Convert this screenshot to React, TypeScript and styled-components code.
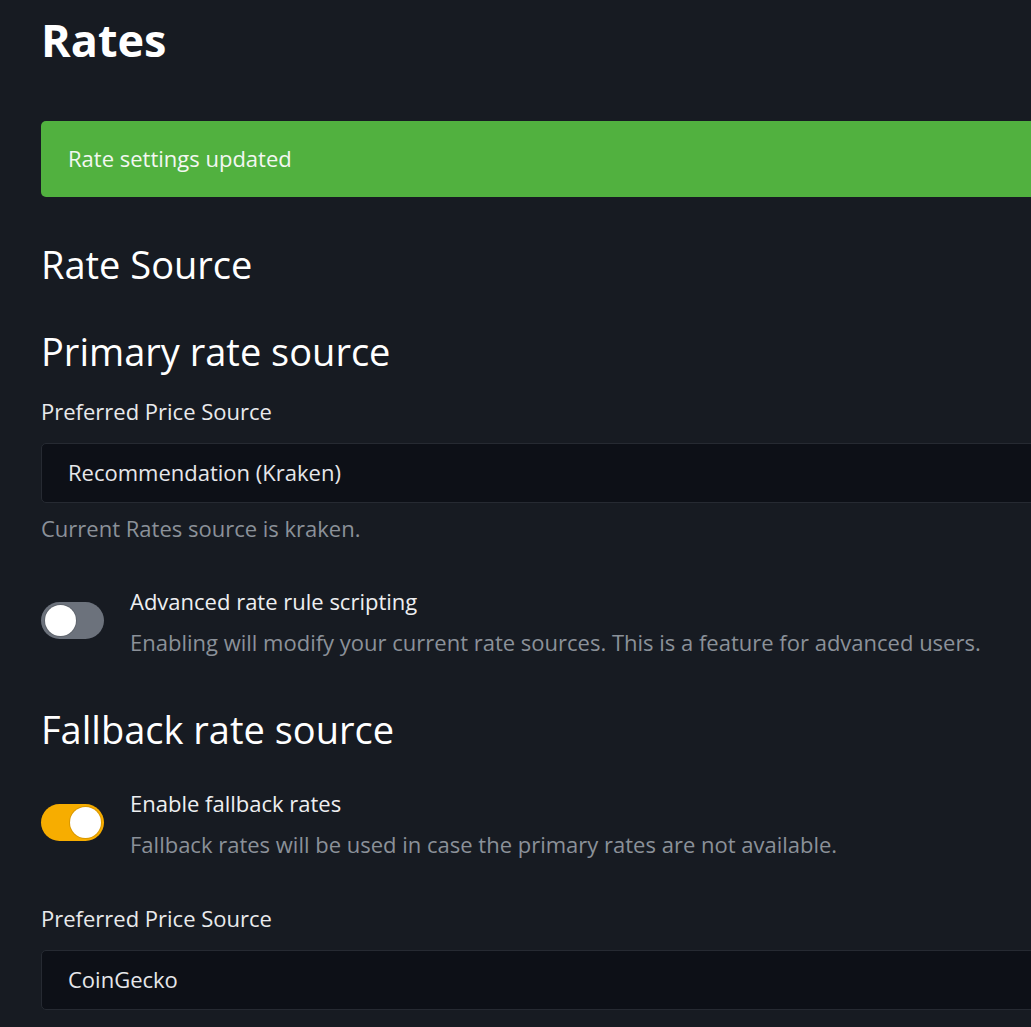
import React from "react";
import styled, { createGlobalStyle } from "styled-components";

const GlobalStyle = createGlobalStyle`
  html, body {
    margin: 0;
    padding: 0;
    background: #171b22;
    overflow: hidden;
  }
  body {
    font-family: "Open Sans", "DejaVu Sans", sans-serif;
    color: #e9eaec;
  }
  * { box-sizing: border-box; }
`;

const Page = styled.main`
  padding: 13px 0 0 41px;
  width: 1240px;
`;

const Title = styled.h2`
  margin: 0;
  font-size: 45px;
  line-height: 54px;
  font-weight: 700;
  color: #ffffff;
`;

const Alert = styled.div`
  margin-top: 54px;
  height: 76px;
  padding: 21px 27px;
  border-radius: 5px;
  background: #51b13f;
  color: #f3f7f2;
  font-size: 22px;
  line-height: 33px;
`;

const Heading = styled.h3<{ $gap: number }>`
  margin: ${(p) => p.$gap}px 0 0;
  font-size: 38px;
  line-height: 45px;
  font-weight: 400;
  color: #ffffff;
`;

const Label = styled.label<{ $gap: number }>`
  display: block;
  margin-top: ${(p) => p.$gap}px;
  font-size: 22px;
  line-height: 33px;
  color: #e9eaec;
`;

const Select = styled.div`
  margin-top: 15px;
  height: 60px;
  padding: 12px 26px 13px;
  border: 1px solid #262a32;
  border-radius: 5px;
  background: #0d1017;
  color: #e6e7ea;
  font-size: 22px;
  line-height: 33px;
`;

const Help = styled.div<{ $gap: number }>`
  margin-top: ${(p) => p.$gap}px;
  font-size: 22px;
  line-height: 33px;
  color: #8b9199;
`;

const SwitchRow = styled.div<{ $gap: number }>`
  margin-top: ${(p) => p.$gap}px;
  display: flex;
  align-items: flex-start;
  gap: 26px;
`;

const Track = styled.span<{ $on: boolean }>`
  position: relative;
  flex: none;
  margin-top: 17px;
  width: 63px;
  height: 37px;
  border-radius: 19px;
  background: ${(p) => (p.$on ? "#f7ad00" : "#6c727c")};
`;

const Knob = styled.span<{ $on: boolean }>`
  position: absolute;
  top: 3px;
  left: ${(p) => (p.$on ? "29px" : "4px")};
  width: 31px;
  height: 31px;
  border-radius: 50%;
  background: #ffffff;
  box-shadow: 0 0 0 1px rgba(0, 0, 0, 0.12);
`;

const SwitchText = styled.div`
  display: flex;
  flex-direction: column;
  gap: 8px;
`;

const SwitchLabel = styled.div`
  font-size: 22px;
  line-height: 33px;
  color: #eeeff1;
`;

const SwitchDesc = styled.div`
  font-size: 22px;
  line-height: 33px;
  color: #8b9199;
`;

function Toggle({
  on,
  gap,
  label,
  desc,
}: {
  on: boolean;
  gap: number;
  label: string;
  desc: string;
}) {
  return (
    <SwitchRow $gap={gap}>
      <Track $on={on} role="switch" aria-checked={on}>
        <Knob $on={on} />
      </Track>
      <SwitchText>
        <SwitchLabel>{label}</SwitchLabel>
        <SwitchDesc>{desc}</SwitchDesc>
      </SwitchText>
    </SwitchRow>
  );
}

export default function App() {
  return (
    <>
      <GlobalStyle />
      <Page>
        <Title>Rates</Title>
        <Alert>Rate settings updated</Alert>

        <Heading $gap={45}>Rate Source</Heading>
        <Heading $gap={42}>Primary rate source</Heading>
        <Label $gap={21}>Preferred Price Source</Label>
        <Select>Recommendation (Kraken)</Select>
        <Help $gap={9}>Current Rates source is kraken.</Help>
        <Toggle
          on={false}
          gap={40}
          label="Advanced rate rule scripting"
          desc="Enabling will modify your current rate sources. This is a feature for advanced users."
        />

        <Heading $gap={48}>Fallback rate source</Heading>
        <Toggle
          on={true}
          gap={35}
          label="Enable fallback rates"
          desc="Fallback rates will be used in case the primary rates are not available."
        />
        <Label $gap={41}>Preferred Price Source</Label>
        <Select>CoinGecko</Select>
        <Help $gap={9}>Current fallback rates source is coingecko.</Help>
      </Page>
    </>
  );
}
